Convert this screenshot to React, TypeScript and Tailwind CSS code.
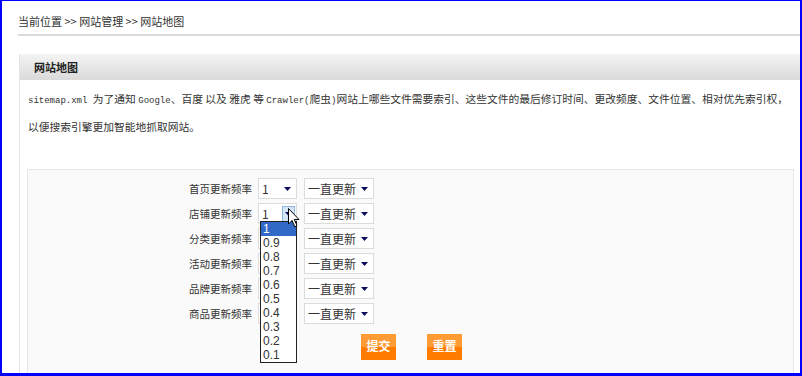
import React from "react";

const CJK = '"Noto Sans CJK SC", "Liberation Sans", sans-serif';
const MONO = '"Liberation Mono", monospace';

const ROWS = ["首页更新频率", "店铺更新频率", "分类更新频率", "活动更新频率", "品牌更新频率", "商品更新频率"];
const OPTIONS = ["1", "0.9", "0.8", "0.7", "0.6", "0.5", "0.4", "0.3", "0.2", "0.1"];

const Arrow = () => (
  <svg width="7" height="4" viewBox="0 0 7 4" className="block">
    <path d="M0 0 L7 0 L3.5 4 Z" fill="#0b0b5c" />
  </svg>
);

function Select({ width, value, open }: { width: string; value?: string; open?: boolean }) {
  return (
    <div
      className={`relative flex h-[21px] items-center justify-between border border-[#dcdcdc] bg-white pl-[3px] text-[12px] text-[#333] ${width}`}
      style={{ fontFamily: CJK }}
    >
      <span className="leading-none">{value}</span>
      {open ? (
        <div className="mr-[1px] flex h-[16px] w-[13px] items-center justify-center border border-[#8db5de] bg-[#d6e6f7]">
          <Arrow />
        </div>
      ) : (
        <div className="mr-[5px]">
          <Arrow />
        </div>
      )}
      {open && (
        <>
          {/* opened option list */}
          <div className="absolute left-[1px] top-[17px] z-10 w-[37px] border border-[#222] bg-white">
            {OPTIONS.map((o, i) => (
              <div
                key={o}
                className={`h-[14px] pl-[2px] text-[12px] leading-[14px] ${
                  i === 0 ? "bg-[#3169c6] text-white" : "text-[#333]"
                }`}
                style={{ fontFamily: '"Liberation Sans", sans-serif' }}
              >
                {o}
              </div>
            ))}
          </div>
          {/* mouse pointer */}
          <svg width="12" height="20" viewBox="0 0 12 20" className="absolute left-[29px] top-[4px] z-20">
            <path d="M0.5 0.5 L0.5 16 L4 12.5 L6.8 18.8 L9 17.8 L6.3 11.5 L11 11.5 Z" fill="#fff" stroke="#000" strokeWidth="1" />
          </svg>
        </>
      )}
    </div>
  );
}

export default function App() {
  return (
    <div className="h-[376px] w-[802px] overflow-hidden border-b-[3px] border-l-2 border-r-2 border-t border-[#0000ff] bg-white">
      <div className="pl-[16px]" style={{ fontFamily: CJK }}>
        {/* breadcrumb */}
        <div className="flex h-[35px] items-center border-b-2 border-[#dadada] pt-[7px] text-[11px] text-[#333]">
          当前位置&nbsp;&gt;&gt;&nbsp;网站管理&nbsp;&gt;&gt;&nbsp;网站地图
        </div>

        <div className="ml-[1px] mt-[18px] border-l border-[#e2e2e2]">
          <div className="flex h-[26px] items-center bg-gradient-to-b from-[#f4f4f4] to-[#dadada] pl-[14px] text-[11px] font-bold text-[#222]">
            网站地图
          </div>

          <div className="pl-[8px] pt-[6px] text-[10.75px] leading-[26px] text-[#333]">
            <div className="whitespace-nowrap">
              <span className="text-[9px]" style={{ fontFamily: MONO }}>sitemap.xml </span>
              为了通知{" "}
              <span className="text-[9px]" style={{ fontFamily: MONO }}>Google</span>
              、百度 以及 雅虎 等{" "}
              <span className="text-[9px]" style={{ fontFamily: MONO }}>Crawler(</span>
              爬虫
              <span className="text-[9px]" style={{ fontFamily: MONO }}>)</span>
              网站上哪些文件需要索引、这些文件的最后修订时间、更改频度、文件位置、相对优先索引权，
            </div>
            <div>以便搜索引擎更加智能地抓取网站。</div>
          </div>

          <div className="ml-[7px] mr-[6px] mt-[29px] h-[210px] border border-[#e6e6e6] bg-[#fafafa] pt-[6px]">
            {ROWS.map((label, i) => (
              <div key={label} className="flex h-[25px] items-center">
                <div className="w-[225px] pr-[1px] text-right text-[10.5px] text-[#333]">{label}</div>
                <div className="ml-[5px]">
                  {/* rows under the open list keep their box, the value is hidden */}
                  <Select width="w-[39px]" value={i < 2 ? "1" : undefined} open={i === 1} />
                </div>
                <div className="ml-[7px]">
                  <Select width="w-[70px]" value="一直更新" />
                </div>
              </div>
            ))}
            <div className="mt-[8px] flex gap-[31px] pl-[333px]">
              <button className="h-[26px] w-[35px] bg-gradient-to-b from-[#ff9b35] from-50% to-[#ff7c00] to-50% pb-[3px] text-[12px] font-bold text-white">
                提交
              </button>
              <button className="h-[26px] w-[35px] bg-gradient-to-b from-[#ff9b35] from-50% to-[#ff7c00] to-50% pb-[3px] text-[12px] font-bold text-white">
                重置
              </button>
            </div>
          </div>
        </div>
      </div>
    </div>
  );
}
